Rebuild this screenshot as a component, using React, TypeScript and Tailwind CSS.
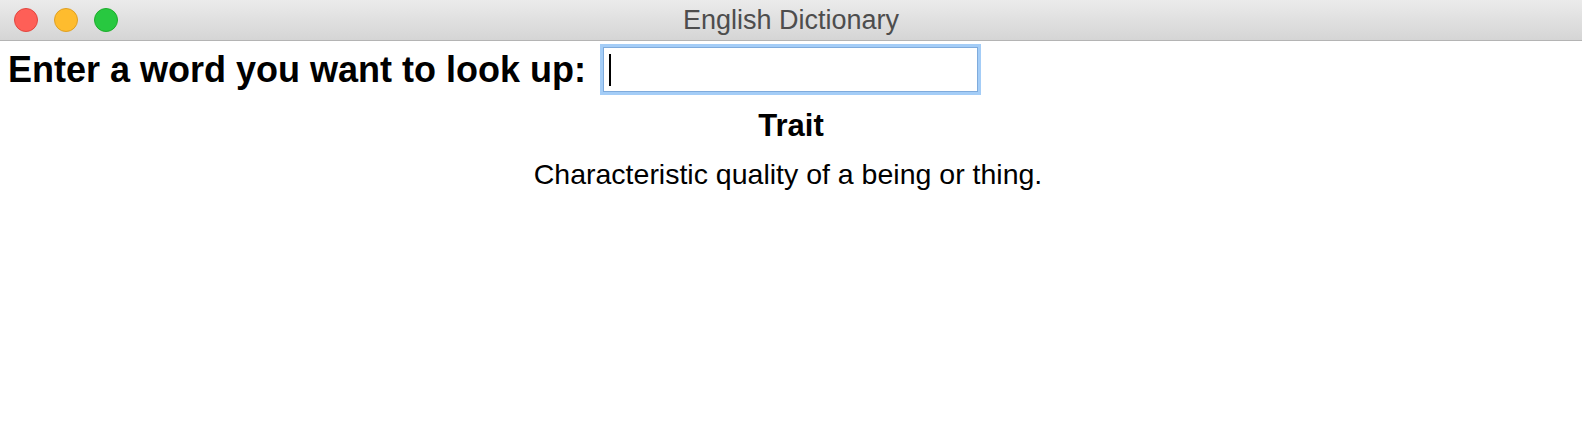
import React from "react";

const font = { fontFamily: '"Liberation Sans", Arial, Helvetica, sans-serif' };

function Light({ cls }: { cls: string }) {
  return <span className={`block h-[24px] w-[24px] rounded-full border ${cls}`} />;
}

export default function App() {
  return (
    <div className="h-[440px] w-[1582px] overflow-hidden bg-white text-black" style={font}>
      {/* title bar */}
      <div className="relative flex h-[41px] items-center justify-center border-b border-[#b4b4b4] bg-gradient-to-b from-[#ebebeb] to-[#d5d5d5]">
        <div className="absolute left-[14px] top-[8px] flex gap-[16px]">
          <Light cls="border-[#e2463f] bg-[#fe5f57]" />
          <Light cls="border-[#dfa023] bg-[#febc2e]" />
          <Light cls="border-[#1dad2b] bg-[#28c840]" />
        </div>
        <span className="text-[27px] leading-none text-[#4d4d4d]">English Dictionary</span>
      </div>

      {/* search row */}
      <div className="flex items-center pl-[8px] pt-[6px]">
        <label className="text-[36px] font-bold leading-[41px]">Enter a word you want to look up:</label>
        <div className="ml-[17px] flex h-[45px] w-[375px] items-center border border-[#7fabdc] bg-white pl-[5px] shadow-[0_0_0_3px_#a4cdf7]">
          <span className="block h-[32px] w-[2px] bg-black" />
        </div>
      </div>

      {/* result */}
      <div className="mt-[16px] text-center text-[31px] font-bold leading-[36px]">Trait</div>
      <div className="mt-[14px] pr-[6px] text-center text-[28.5px] leading-[32px]">
        Characteristic quality of a being or thing.
      </div>
    </div>
  );
}
